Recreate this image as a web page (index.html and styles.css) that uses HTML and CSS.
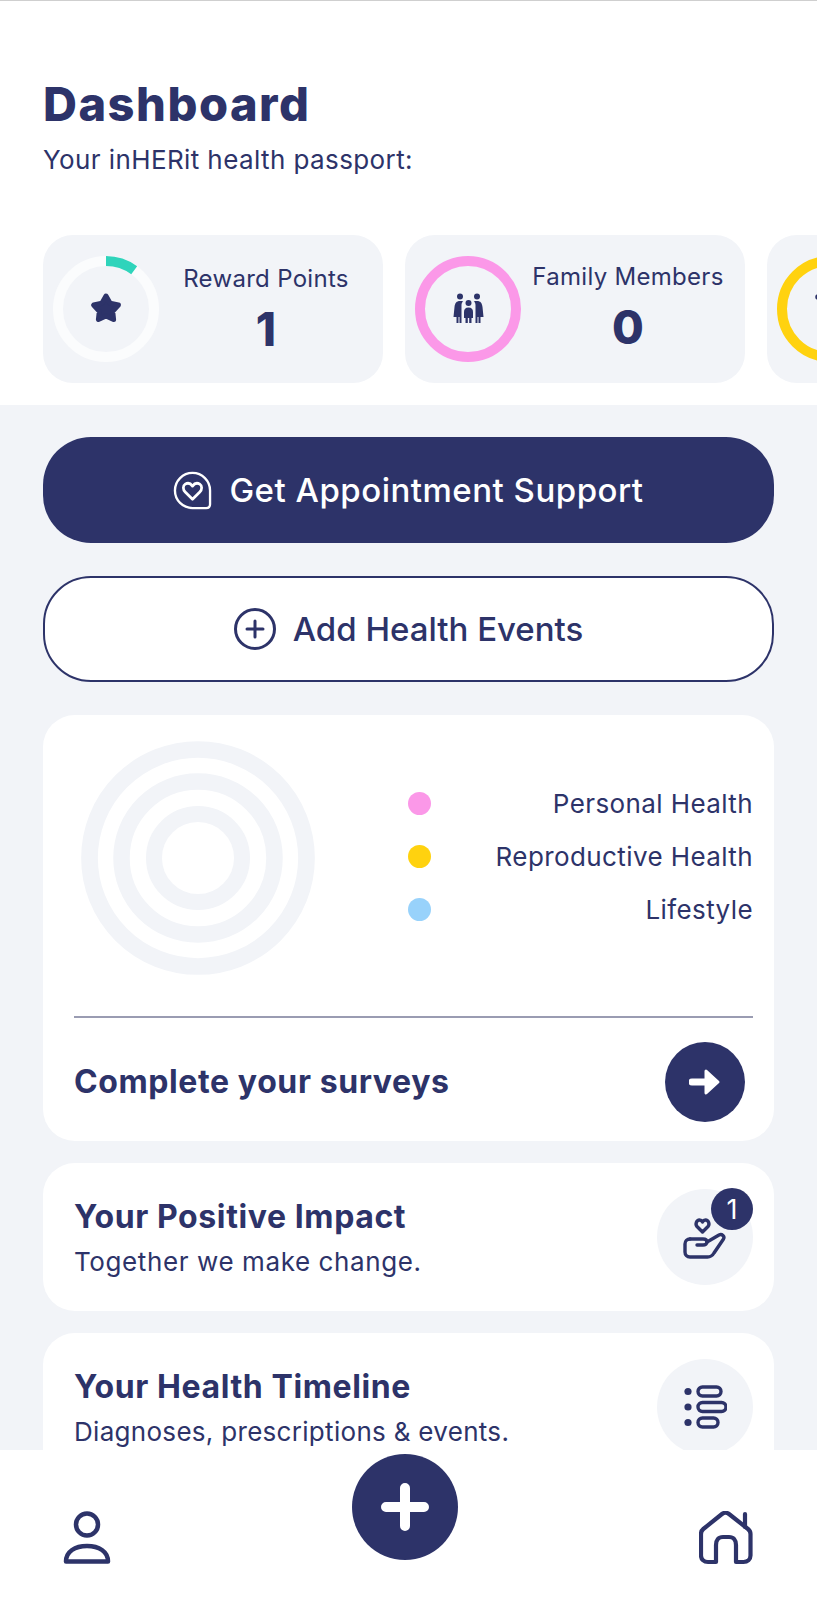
FILE: index.html
```html
<!DOCTYPE html>
<html lang="en">
<head>
<meta charset="utf-8">
<title>Dashboard</title>
<link rel="stylesheet" href="styles.css">
</head>
<body>
<div class="app">
  <div class="scroll">
    <header class="top">
      <h1 class="title">Dashboard</h1>
      <p class="subtitle">Your inHERit health passport:</p>
      <div class="stats">
        <div class="stat">
          <svg class="ring" viewBox="0 0 106 106">
            <circle cx="53" cy="53" r="48" fill="none" stroke="#fbfcfd" stroke-width="10"/>
            <path d="M53 5A48 48 0 0 1 81.200 14.200" fill="none" stroke="#2fd4bb" stroke-width="10"/>
            <polygon points="53,40 57.100,47.300 65.400,49 59.700,55.200 60.600,63.500 53,60 45.400,63.500 46.300,55.200 40.600,49 48.900,47.300" fill="#2d3369" stroke="#2d3369" stroke-width="5" stroke-linejoin="round"/>
          </svg>
          <div class="stat-text">
            <span class="stat-label">Reward Points</span>
            <span class="stat-value">1</span>
          </div>
        </div>
        <div class="stat">
          <svg class="ring" viewBox="0 0 106 106">
            <circle cx="53" cy="53" r="48" fill="none" stroke="#fb98e8" stroke-width="10"/>
            <g fill="#2d3369">
              <circle cx="45" cy="40.500" r="3"/>
              <circle cx="62" cy="40.500" r="3"/>
              <circle cx="53.500" cy="47" r="3"/>
              <path d="M45 45c-3.500 0-5 2-5.500 6L38.500 61h3v6h2v-6h1v6h2V49c0-1.500.5-3 1.800-3.500-.8-.4-2-.5-3.300-.5z"/>
              <path d="M62 45c3.500 0 5 2 5.500 6L68.500 61h-3v6h-2v-6h-1v6h-2V49c0-1.500-.5-3-1.800-3.500.8-.4 2-.5 3.300-.5z"/>
              <path d="M53.500 51.500c-3 0-4.500 1.500-4.500 4.500v6h1.500v5h2.300v-5h1.400v5h2.300v-5h1.500v-6c0-3-1.500-4.500-4.500-4.500z"/>
            </g>
          </svg>
          <div class="stat-text stat-text-high">
            <span class="stat-label">Family Members</span>
            <span class="stat-value">0</span>
          </div>
        </div>
        <div class="stat">
          <svg class="ring" viewBox="0 0 106 106">
            <circle cx="53" cy="53" r="48" fill="none" stroke="#ffd20f" stroke-width="10"/>
            <circle cx="41" cy="41" r="2.800" fill="#2d3369"/>
          </svg>
        </div>
      </div>
    </header>

    <main class="content">
      <button class="pill pill-solid">
        <svg class="pill-icon" viewBox="0 0 40 40" fill="none" stroke="#fff" stroke-width="2.400" stroke-linejoin="round">
          <path d="M20 2C10 2 2 10 2 20s8 18 18 18h14c2.500 0 4-1.500 4-4V20C38 10 30 2 20 2z"/>
          <path d="M20 29l-7.500-7.500c-2.500-2.500-2.500-6.500 0-8 2.500-1.500 5.500-.8 7.500 2 2-2.800 5-3.500 7.500-2 2.500 1.500 2.500 5.500 0 8z" stroke-width="2.800"/>
        </svg>
        <span class="pill-label-wide">Get Appointment Support</span>
      </button>
      <button class="pill pill-outline">
        <svg class="pill-icon pill-icon-lg" viewBox="0 0 42 42" fill="none" stroke="#2d3369" stroke-width="3" stroke-linecap="round">
          <circle cx="21" cy="21" r="19.500"/>
          <path d="M21 13v16M13 21h16"/>
        </svg>
        <span>Add Health Events</span>
      </button>

      <section class="card survey">
        <div class="survey-top">
          <svg class="donut" viewBox="0 0 234 234" fill="none" stroke="#f2f4f8">
            <circle cx="117" cy="117" r="108.500" stroke-width="16.700"/>
            <circle cx="117" cy="117" r="76.500" stroke-width="16.500"/>
            <circle cx="117" cy="117" r="44" stroke-width="16"/>
          </svg>
          <ul class="legend">
            <li class="legend-row"><span class="dot dot-pink"></span><span>Personal Health</span></li>
            <li class="legend-row"><span class="dot dot-yellow"></span><span>Reproductive Health</span></li>
            <li class="legend-row"><span class="dot dot-blue"></span><span>Lifestyle</span></li>
          </ul>
        </div>
        <div class="survey-bottom">
          <span class="card-title">Complete your surveys</span>
          <span class="arrow-btn">
            <svg viewBox="0 0 32 28" width="32" height="28" fill="#fff" stroke="#fff" stroke-linejoin="round" stroke-linecap="round">
              <path d="M3 14h14" stroke-width="7"/>
              <path d="M17 3l12 11-12 11z" stroke-width="3"/>
            </svg>
          </span>
        </div>
      </section>

      <section class="card row-card">
        <div class="row-text">
          <h2 class="card-title">Your Positive Impact</h2>
          <p class="card-sub">Together we make change.</p>
        </div>
        <span class="round-icon">
          <svg class="hand-icon" viewBox="0 0 44 44" width="44" height="44" fill="none" stroke="#2d3369" stroke-width="3.400" stroke-linejoin="round" stroke-linecap="round">
            <path d="M19.500 15l-5.500-5.500c-2-2.200-.5-6.500 2.500-6.500 1.300 0 2.300.7 3 2 .7-1.300 1.700-2 3-2 3 0 4.500 4.300 2.500 6.500z"/>
            <path d="M7 22h13c3 0 4 1.500 4 3s-1.500 3-4 3h-6"/>
            <path d="M24 25l12-7c3-1.500 6 1.500 4.500 4L31 36c-1.500 2.500-3.500 4-6.500 4H7c-3 0-5-2-5-5v-8c0-3 2-5 5-5"/>
          </svg>
          <span class="badge">1</span>
        </span>
      </section>

      <section class="card row-card">
        <div class="row-text">
          <h2 class="card-title">Your Health Timeline</h2>
          <p class="card-sub card-sub-long">Diagnoses, prescriptions &amp; events.</p>
        </div>
        <span class="round-icon">
          <svg viewBox="0 0 44 44" width="44" height="44" fill="none" stroke="#2d3369" stroke-width="3.400">
            <circle cx="5" cy="6.500" r="3.600" fill="#2d3369" stroke="none"/>
            <circle cx="5" cy="22" r="3.600" fill="#2d3369" stroke="none"/>
            <circle cx="5" cy="37.500" r="3.600" fill="#2d3369" stroke="none"/>
            <rect x="15" y="2" width="23" height="9" rx="4.500"/>
            <rect x="15" y="17.500" width="28" height="9" rx="4.500"/>
            <rect x="15" y="33" width="20" height="9" rx="4.500"/>
          </svg>
        </span>
      </section>
    </main>
  </div>

  <nav class="nav">
    <svg class="nav-icon" viewBox="0 0 48 54" fill="none" stroke="#2d3369" stroke-width="4.500" stroke-linejoin="round">
      <circle cx="24" cy="13.500" r="11"/>
      <path d="M3 50.500c0-10 9-15.500 21-15.500s21 5.500 21 15.500z"/>
    </svg>
    <span class="fab">
      <svg viewBox="0 0 48 48" width="48" height="48" stroke="#fff" stroke-width="10" stroke-linecap="round">
        <path d="M24 5v38M5 24h38"/>
      </svg>
    </span>
    <svg class="nav-icon nav-icon-home" viewBox="0 0 54 54" fill="none" stroke="#2d3369" stroke-width="4.200" stroke-linejoin="round" stroke-linecap="round">
      <path d="M17 51H9c-4 0-7-2.500-7-6.500V23c0-2 .8-3.800 2.300-5L23 3c2-1.600 5-1.600 7 0l19 15c1.500 1.200 2.500 3 2.500 5v21.500c0 4-3 6.500-7 6.500H37V34c0-5-2.500-8-7-8h-6c-4.500 0-7 3-7 8z"/>
      <path d="M46 3v13"/>
    </svg>
  </nav>
</div>
</body>
</html>
```
FILE: styles.css
```css
* { box-sizing: border-box; }

html, body { margin: 0; padding: 0; }

body {
  background: #fff;
  color: #2d3369;
  font-family: Inter, "Noto Sans", "Liberation Sans", sans-serif;
}

.app {
  width: 817px;
  height: 1600px;
  display: flex;
  flex-direction: column;
  overflow: hidden;
  border-top: 1px solid #cfcfcf;
}

.scroll {
  height: 1449px;
  overflow: hidden;
  background: #f2f4f8;
}

.top {
  height: 404px;
  padding: 78px 0 0 43px;
  background: #fff;
  overflow: hidden;
}

.title {
  margin: 0;
  font-size: 47px;
  line-height: 50px;
  font-weight: 800;
  letter-spacing: 1.5px;
}

.subtitle {
  margin: 15px 0 0;
  font-size: 26px;
  line-height: 32px;
  font-weight: 400;
  letter-spacing: 0.4px;
}

.stats {
  display: flex;
  gap: 22px;
  margin-top: 59px;
}

.stat {
  flex: 0 0 340px;
  height: 148px;
  padding: 21px 10px;
  display: flex;
  align-items: flex-start;
  background: #f2f4f8;
  border-radius: 30px;
}

.ring { width: 106px; height: 106px; flex: none; }

.stat-text {
  flex: 1;
  display: flex;
  flex-direction: column;
  align-items: center;
  padding: 8px 0 0 0;
}

.stat-text-high { padding-top: 6px; }

.stat-label {
  font-size: 24px;
  line-height: 30px;
  letter-spacing: 0.3px;
  white-space: nowrap;
}

.stat-value {
  margin-top: 8px;
  font-size: 46px;
  line-height: 54px;
  font-weight: 800;
}

.content {
  padding: 32px 43px 0;
  display: flex;
  flex-direction: column;
}

.pill {
  height: 106px;
  border-radius: 48px;
  display: flex;
  align-items: center;
  justify-content: center;
  gap: 17px;
  font: 500 33px/1 Inter, "Noto Sans", sans-serif;
}

.pill-label-wide { letter-spacing: 0.5px; }

.pill-solid {
  background: #2d3369;
  color: #fff;
  border: 0;
}

.pill-outline {
  margin-top: 33px;
  background: #fff;
  color: #2d3369;
  border: 2px solid #2d3369;
}

.pill-icon { width: 39px; height: 39px; }
.pill-icon-lg { width: 42px; height: 42px; }

.card {
  background: #fff;
  border-radius: 32px;
}

.survey {
  margin-top: 33px;
  height: 426px;
  padding: 26px 21px 0 31px;
}

.survey-top {
  height: 277px;
  display: flex;
  border-bottom: 2px solid #9a9cb2;
  padding-left: 7px;
}

.donut { width: 234px; height: 234px; flex: none; }

.legend {
  flex: 1;
  list-style: none;
  margin: 0;
  padding: 36px 0 0 93px;
}

.legend-row {
  height: 53px;
  display: flex;
  align-items: center;
  justify-content: space-between;
  font-size: 26px;
  letter-spacing: 0.4px;
}

.dot {
  width: 23px;
  height: 23px;
  border-radius: 50%;
}

.dot-pink { background: #fb98e8; }
.dot-yellow { background: #ffd20f; }
.dot-blue { background: #98d2fb; }

.survey-bottom {
  display: flex;
  align-items: center;
  justify-content: space-between;
  padding: 24px 8px 0 0;
}

.card-title {
  margin: 0;
  font-size: 32px;
  line-height: 40px;
  font-weight: 700;
  letter-spacing: 0.6px;
}

.arrow-btn {
  width: 80px;
  height: 80px;
  border-radius: 50%;
  background: #2d3369;
  display: flex;
  align-items: center;
  justify-content: center;
}

.row-card {
  margin-top: 22px;
  height: 148px;
  flex: none;
  padding: 0 21px 0 31px;
  display: flex;
  align-items: center;
  justify-content: space-between;
}

.row-text { padding-top: 2px; }

.card-sub {
  margin: 8px 0 0;
  font-size: 26px;
  line-height: 34px;
  letter-spacing: 0.6px;
}

.card-sub-long { letter-spacing: 0.3px; }

.round-icon {
  position: relative;
  width: 96px;
  height: 96px;
  border-radius: 50%;
  background: #f2f4f8;
  display: flex;
  align-items: center;
  justify-content: center;
}

.hand-icon { margin-top: 3px; }

.badge {
  position: absolute;
  top: -1px;
  right: 0;
  width: 42px;
  height: 42px;
  border-radius: 50%;
  background: #2d3369;
  color: #fff;
  display: flex;
  align-items: center;
  justify-content: center;
  font-size: 27px;
  font-weight: 400;
}

.nav {
  flex: 1;
  background: #fff;
  padding: 0 64px 0 63px;
  display: flex;
  justify-content: space-between;
  align-items: flex-start;
}

.nav-icon { width: 48px; height: 54px; margin-top: 61px; flex: none; }
.nav-icon-home { width: 54px; }

.fab {
  width: 106px;
  height: 106px;
  margin-top: 4px;
  border-radius: 50%;
  background: #2d3369;
  display: flex;
  align-items: center;
  justify-content: center;
}
```
